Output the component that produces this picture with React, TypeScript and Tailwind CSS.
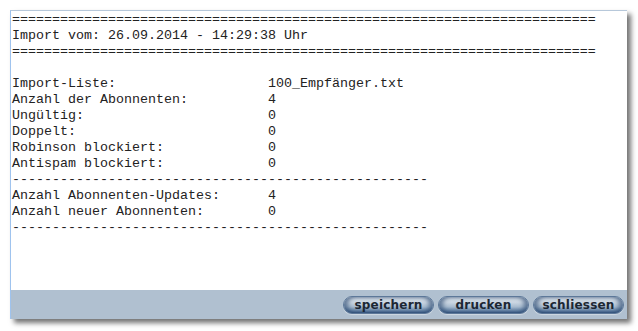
import React from "react";

const EQ = "=".repeat(73);
const DASH = "-".repeat(52);

function row(label: string, value: string) {
  return label.padEnd(32, " ") + value;
}

const lines = [
  EQ,
  "Import vom: 26.09.2014 - 14:29:38 Uhr",
  EQ,
  "",
  row("Import-Liste:", "100_Empfänger.txt"),
  row("Anzahl der Abonnenten:", "4"),
  row("Ungültig:", "0"),
  row("Doppelt:", "0"),
  row("Robinson blockiert:", "0"),
  row("Antispam blockiert:", "0"),
  DASH,
  row("Anzahl Abonnenten-Updates:", "4"),
  row("Anzahl neuer Abonnenten:", "0"),
  DASH,
];

function Btn({ label }: { label: string }) {
  return (
    <button
      className="h-[18px] w-[91px] rounded-full border border-[#5d7899] bg-[linear-gradient(180deg,#e6ecf2_0%,#c9d5e1_35%,#a9bccf_60%,#5f7fa3_90%,#3e5f86_100%)] shadow-[inset_4px_0_4px_rgba(40,70,110,0.6),inset_-4px_0_4px_rgba(40,70,110,0.6),0_1px_1px_rgba(255,255,255,0.4)] text-[12px] font-bold leading-none text-[#1c2733]"
      style={{ fontFamily: '"DejaVu Sans", Verdana, sans-serif', letterSpacing: "0.2px" }}
    >
      {label}
    </button>
  );
}

export default function App() {
  return (
    <div className="w-[638px] h-[331px] bg-white pt-[10px] pl-[10px]">
      <div className="w-[617px] h-[309px] flex flex-col bg-white border-t border-t-[#b7c8da] border-l border-l-[#9fc3ee] shadow-[4px_4px_5px_rgba(0,0,0,0.55)]">
        <pre
          className="flex-1 m-0 pl-[1px] pt-[1px] text-[13.333px] leading-[16px] text-[#222222]"
          style={{ fontFamily: '"Liberation Mono", "Courier New", monospace' }}
        >
          {lines.join("\n")}
        </pre>
        <div className="h-[29px] bg-[#b0c0d0] flex items-center justify-end gap-[4px] pr-[3px]">
          <Btn label="speichern" />
          <Btn label="drucken" />
          <Btn label="schliessen" />
        </div>
      </div>
    </div>
  );
}
